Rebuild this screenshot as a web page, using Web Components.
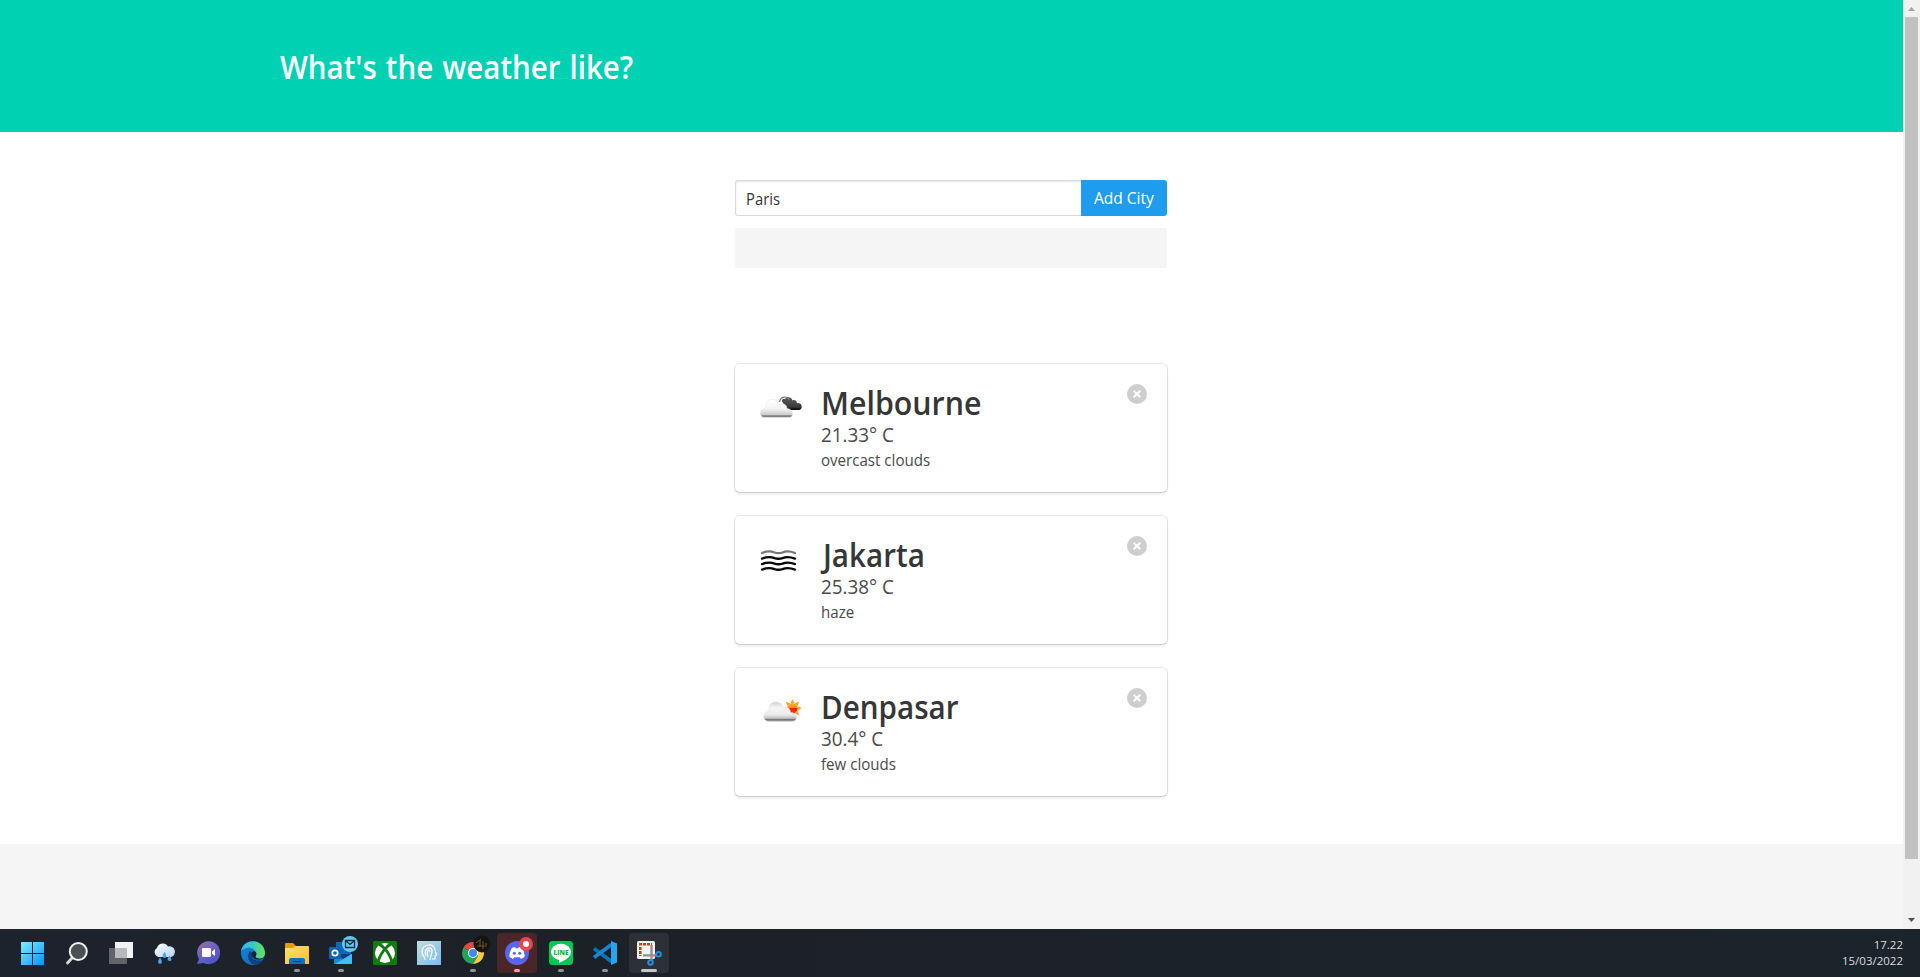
<!DOCTYPE html>
<html lang="en">
<head>
<meta charset="utf-8">
<title>Weather</title>
<style>
html,body{margin:0;height:100%;overflow:hidden}
body{font-family:"Open Sans","Noto Sans",sans-serif;color:#4a4a4a;background:#fff;font-size:16px}
</style>
</head>
<body>
<weather-desktop></weather-desktop>
<script>
const define=(name,html)=>customElements.define(name,class extends HTMLElement{
  constructor(){
    super();
    const t=document.createElement('template');
    t.innerHTML=html;
    this.attachShadow({mode:'open'}).append(t.content.cloneNode(true));
  }
});

define('page-hero',`<style>
:host{display:block;height:132px;background:#00d1b2;box-sizing:border-box;padding:49px 0 0 280px}
h1{margin:0;color:#fff;font-size:32px;line-height:36px;font-weight:600;white-space:nowrap;width:max-content;word-spacing:1.500px;transform:scaleX(.921);transform-origin:0 0}
</style><h1><slot></slot></h1>`);

define('city-form',`<style>
:host{display:block}
.row{display:flex;height:36px}
.field{flex:1;box-sizing:border-box;border:1px solid #dbdbdb;border-right:0;border-radius:3px 0 0 3px;box-shadow:inset 0 1px 2px rgba(10,10,10,.1);padding:0 9.500px;line-height:36px;color:#363636}
.value{display:inline-block;transform:scaleX(.925);transform-origin:0 0}
button{width:86px;border:0;border-radius:0 3px 3px 0;background:#209cee;color:#fff;font:inherit;padding:0;line-height:36px;white-space:nowrap}
.label{display:inline-block;transform:scaleX(.97)}
.note{height:40px;margin-top:12px;border-radius:3px;background:#f5f5f5}
</style><div class="row"><div class="field"><span class="value"><slot></slot></span></div><button><span class="label"><slot name="action"></slot></span></button></div><div class="note"></div>`);

define('weather-card',`<style>
:host{display:flex;box-sizing:border-box;height:128px;padding:20px;border-radius:5px;background:#fff;box-shadow:0 2px 3px rgba(10,10,10,.1),0 0 0 1px rgba(10,10,10,.1)}
.icon{width:50px;height:50px;margin-right:16px}
.text{flex:1;white-space:nowrap}
.text div{width:max-content;transform:scaleX(.943);transform-origin:0 0}
.text .name{font-size:32px;line-height:37px;font-weight:600;color:#363636;transform:scaleX(var(--fit,.925));margin-left:var(--nudge,0)}
.temp{font-size:20px;line-height:28px}
.desc{font-size:16px;line-height:22px}
.close{width:20px;height:20px}
</style><div class="icon"><slot name="icon"></slot></div>
<div class="text"><div class="name"><slot name="city"></slot></div><div class="temp"><slot name="temp"></slot></div><div class="desc"><slot name="desc"></slot></div></div>
<svg class="close" viewBox="0 0 20 20"><circle cx="10" cy="10" r="10" fill="#cecece"/><path d="M6.700 6.700l6.600 6.600m0-6.600l-6.600 6.600" stroke="#fff" stroke-width="2.100"/></svg>`);

define('page-scrollbar',`<style>
:host{display:flex;flex-direction:column;width:17px;background:#f1f1f1;align-items:center}
svg{width:17px;height:17px;display:block}
.thumb{width:13px;height:842px;background:#c1c1c1}
.gap{flex:1}
</style><svg viewBox="0 0 17 17"><path d="M5 11h7L8.500 7z" fill="#a3a3a3"/></svg><div class="thumb"></div><div class="gap"></div><svg viewBox="0 0 17 17"><path d="M5 6h7L8.500 10z" fill="#505050"/></svg>`);

define('task-icon',`<style>
:host{display:flex;width:44px;height:48px;justify-content:center;align-items:center}
.tile{width:40px;height:40px;border-radius:4px;display:flex;flex-direction:column;align-items:center;position:relative}
:host([state=alert]) .tile{background:#4a2629}
:host([state=active]) .tile{background:#2c3138}
::slotted(svg){width:44px;height:48px;margin:-4px -2px;flex:none;overflow:visible}
.pill{position:absolute;bottom:1px;width:6px;height:3px;border-radius:2px;background:#929497;display:none}
:host([state]) .pill{display:block}
:host([state=alert]) .pill{background:#ff99a4}
:host([state=active]) .pill{width:16px;background:#c4c6c4}
</style><div class="tile"><slot></slot><div class="pill"></div></div>`);

define('task-clock',`<style>
:host{display:flex;flex-direction:column;align-items:flex-end;margin-left:auto;margin-right:17px;margin-top:-1px;color:#dcdedf;font-size:11.500px;line-height:16px}
</style><slot></slot>`);

define('task-bar',`<style>
:host{display:flex;align-items:center;height:48px;box-sizing:border-box;padding-left:11px;background:linear-gradient(90deg,#1d232d,#1c2127 30%,#1c222a 60%,#1b232b)}
</style>
<task-icon><svg viewBox="-22 -24 44 48"><defs><linearGradient id="w" x2="1" y2="1"><stop stop-color="#7df0ff"/><stop offset="1" stop-color="#0592ff"/></linearGradient></defs><path fill="url(#w)" d="M-12-11H-1V0H-12zM0-11H11V0H0zM-12 1H-1V12H-12zM0 1H11V12H0z"/></svg></task-icon>
<task-icon><svg viewBox="-22 -24 44 48"><path d="M-5 5L-9.500 10" stroke="#d7d9dc" stroke-width="2.800" stroke-linecap="round"/><circle cx="1.300" cy="-1.500" r="8.500" fill="#4b5057" stroke="#f0f0f0" stroke-width="2"/></svg></task-icon>
<task-icon><svg viewBox="-22 -24 44 48"><path fill="#f2f2f2" d="M-6-11H12V5H-6z"/><path fill="#626467" d="M-12-5H6V11H-12z"/><path fill="#b9babb" d="M-6-5H6V5H-6z"/></svg></task-icon>
<task-icon><svg viewBox="-21 -24 44 48"><defs><linearGradient id="c" x2="1" y2="1"><stop stop-color="#fff"/><stop offset="1" stop-color="#b3d3ee"/></linearGradient></defs><path fill="url(#c)" d="M-6 4a5 5 0 0 1-1-9 6 6 0 0 1 11-1.500 5 5 0 0 1 3 10.500z"/><path fill="#4fa4ef" d="M-4 4.500c-3 4-2 6 0 6.500 2.500-.5 2.500-3 0-6.500zM.5-1c-3 4-2 5.500 0 6 2.500-.5 2.500-3 0-6zM5.500 2.500c-3 4-2 5 0 5.500 2.500 0 2.500-2 0-5.500z"/></svg></task-icon>
<task-icon><svg viewBox="-22 -24 44 48"><defs><linearGradient id="t" x2=".7" y2="1"><stop stop-color="#9c71a5"/><stop offset=".6" stop-color="#655fc5"/><stop offset="1" stop-color="#4b52c9"/></linearGradient></defs><path fill="url(#t)" d="M-12 11l2-5A11.500 11.500 0 1 1-5.500 10z"/><rect x="-7" y="-5" width="9" height="9" rx="1" fill="#fff"/><path fill="#fff" d="M3-1.500L6-4V3L3 .8z"/></svg></task-icon>
<task-icon><svg viewBox="-22 -24 44 48"><defs><linearGradient id="e" x2="1"><stop stop-color="#35b9ee"/><stop offset=".5" stop-color="#36c9c7"/><stop offset="1" stop-color="#6ee34c"/></linearGradient><linearGradient id="e2" x2="1" y2="1"><stop stop-color="#1389d8"/><stop offset="1" stop-color="#1064b7"/></linearGradient></defs><circle r="12" fill="url(#e2)"/><path fill="url(#e)" d="M-11.900-2C-10-15 11-15 12 0 12 5 7 7 3 5.500 1 5 1 4 2.500 2 4-3-2-6-6-5-9-4.500-11-3-11.900-2z"/><path fill="#123f82" d="M-3-2C-7 3-4 11 2 12 6 11.500 9 9 10.500 7 3 9-3 6-1-.5z"/><path fill="#1c222b" d="M1-2c-4 1-3 8 3 8.500 4 0 6-.5 7.800-2C8 6 3 5.500 2.500 4 4 1 4-1 1-2z"/></svg></task-icon>
<task-icon state="open"><svg viewBox="-22 -24 44 48"><defs><linearGradient id="f" y2="1" x2="1"><stop stop-color="#ffe07a"/><stop offset="1" stop-color="#f8bd24"/></linearGradient></defs><path fill="#e19c12" d="M-12-9q0-1 1-1h7l3 3h4v5H-12z"/><path fill="url(#f)" d="M-12-5H-4L-1-7H11q1 0 1 1V11H-12z"/><path fill="#0c70c5" d="M-8 11V7q0-2 2-2H6q2 0 2 2v4z"/><path stroke="#063d7d" d="M-4 8.500H4"/></svg></task-icon>
<task-icon state="open"><svg viewBox="-22 -24 44 48"><path fill="#1068b9" d="M-5-11H10V4H-5z"/><path fill="#1a8ad8" d="M-7 1H11V11H-7z"/><path fill="#123b6d" d="M-5 1H10L2 6z"/><path fill="#41bdf2" d="M-6 11L11 1V10q0 1-1 1z"/><rect x="-12" y="-6" width="12" height="12" rx="1" fill="#0a64b8"/><circle cx="-6" cy="0" r="2.700" fill="none" stroke="#fff" stroke-width="1.700"/><circle cx="9" cy="-9" r="8" fill="#62c8f7"/><path fill="none" stroke="#142b38" stroke-width="1.300" d="M4.500-12.500H13.500V-5.500H4.500zl4.500 4 4.500-4"/></svg></task-icon>
<task-icon><svg viewBox="-22 -24 44 48"><rect x="-12" y="-12" width="24" height="24" rx="1.500" fill="#107c10"/><circle r="10" fill="#fff"/><path fill="none" stroke="#107c10" stroke-width="2.800" d="M-7 8.500C-5 3-2-2 0-4 2-2 5 3 7 8.500M-6-8.500C-3-8-1-5 0-4 1-5 3-8 6-8.500"/></svg></task-icon>
<task-icon><svg viewBox="-22 -24 44 48"><defs><linearGradient id="h" x2="1" y2="1"><stop stop-color="#c3dedb"/><stop offset="1" stop-color="#76baf2"/></linearGradient></defs><path fill="url(#h)" d="M-12-12H12V12H-12z"/><path fill="none" stroke="#fff" stroke-width="1.200" d="M-4 7C-3 4-7 3-7-1-7-10 6-10 6-3L7.500 2 6 3V6H3M-3 3C-6-5 3-8 3-2 3 2 1 3 1 7M-1 4C-3-3 1-5 1-1"/></svg></task-icon>
<task-icon state="open"><svg viewBox="-22 -24 44 48"><path fill="#e34a3f" d="M0 0L-9.500-5.500A11 11 0 0 1 9.500-5.500L10 0z"/><path fill="#22a45a" d="M0 0L-9.500-5.500A11 11 0 0 0 0 11L5 3z"/><path fill="#fccb3c" d="M0-5H9.800A11 11 0 0 1 0 11L5 3z"/><circle r="5" fill="#fff"/><circle r="4" fill="#4187ee"/><circle cx="9" cy="-9" r="8.500" fill="#17140f"/><path stroke="#6b572b" stroke-width="1" d="M3-10l5-4M7-6V-13M10-4v-8M13-10v4M4-7h8"/></svg></task-icon>
<task-icon state="alert"><svg viewBox="-22 -24 44 48"><circle r="12" fill="#5865f2"/><path fill="#fff" d="M-5-5.200L-2-6l.8 1.200H1.200L2-6l3 .8C7-2 8 2 7.500 4L4 6 2.800 4.200H-2.800L-4 6-7.500 4C-8 2-7-2-5-5.200z"/><circle cx="-2.700" cy=".3" r="1.500" fill="#5865f2"/><circle cx="2.700" cy=".3" r="1.500" fill="#5865f2"/><circle cx="9" cy="-9" r="7" fill="#e5484d"/><circle cx="9" cy="-9" r="3" fill="#fff"/></svg></task-icon>
<task-icon state="open"><svg viewBox="-22 -24 44 48"><rect x="-12" y="-12" width="24" height="24" rx="3.500" fill="#06c755"/><ellipse cy="-1" rx="10" ry="8.300" fill="#fff"/><path fill="#fff" d="M-2 6V10Q7 6 8.500 3z"/><text y="1.600" text-anchor="middle" font-family="Open Sans,sans-serif" font-size="6.500" font-weight="800" fill="#06b94d">LINE</text></svg></task-icon>
<task-icon state="open"><svg viewBox="-22 -24 44 48"><path fill="none" stroke="#0d73ba" stroke-width="3.800" d="M-11-4.500L6.500 8.500"/><path fill="none" stroke="#1688cf" stroke-width="3.800" d="M-11 4.500L6.500-8.500"/><path fill="#2ba3ec" d="M6-12L12-9.500V9.500L6 12z"/></svg></task-icon>
<task-icon state="active"><svg viewBox="-22 -24 44 48"><rect x="-12" y="-12" width="18" height="18" rx="1.500" fill="#f4f4f4"/><path fill="none" stroke="#d83b12" stroke-width="2.600" stroke-dasharray="3 1" d="M-10-8.700H3M-8.700-6V3"/><path fill="none" stroke="#8b9197" stroke-width="2.300" d="M2.500-8V7M-6 2.300H8"/><g fill="none" stroke="#2490df" stroke-width="1.900"><circle cx="9.500" cy="1.300" r="2.300"/><circle cx="1.500" cy="9.500" r="2.300"/></g></svg></task-icon>
<task-clock><span>17.22</span><span>15/03/2022</span></task-clock>`);

define('weather-desktop',`<style>
:host{display:flex;flex-direction:column;width:1920px;height:977px}
.view{display:flex;height:929px}
.page{width:1903px;display:flex;flex-direction:column}
.body{height:712px;box-sizing:border-box;display:flex;flex-direction:column;align-items:center;padding:48px 1px 0 0}
city-form,weather-card{width:432px}
city-form{margin-bottom:96px}
weather-card{margin-bottom:24px}
.wide{--fit:.948}
.hook{--nudge:1.500px}
footer{flex:1;background:#f5f5f5}
svg{display:block;width:50px;height:50px}
</style>
<div class="view"><div class="page">
<page-hero>What's the weather like?</page-hero>
<div class="body">
<city-form>Paris<span slot="action">Add City</span></city-form>
<weather-card class="wide"><svg slot="icon" viewBox="0 0 50 50"><defs><linearGradient id="a" x2="0" y2="1"><stop stop-color="#fff"/><stop offset=".5" stop-color="#f4f4f4"/><stop offset=".84" stop-color="#ccc"/><stop offset=".91" stop-color="#707070"/><stop offset="1" stop-color="#aaa"/></linearGradient><linearGradient id="b" x2="0" y2="1"><stop stop-color="#5c5c5c"/><stop offset=".75" stop-color="#3a3a3a"/><stop offset="1" stop-color="#000"/></linearGradient></defs><path fill="url(#b)" d="M31 24c-1-4-4-5-4-7.500 0-1.500 2-2 3-1.500 2-3 7-2 7.500 1.500 2-1 4 0 4.500 2.500 3 0 4.700 1 4.700 3.500 0 2-1 3.600-3 3.600H34z"/><path fill="none" stroke="#777" stroke-width="1.200" d="M24.500 18c1-6 8-6.500 9.500-2"/><path fill="url(#a)" stroke="#e2e2e2" stroke-width=".5" d="M10 33.600H34C39 33.600 39 25 32 24.500 32 20.500 28 19 24.500 21 24.500 17.500 21.500 15.500 17.500 15.500 13 15.500 10.300 19 10.500 24.500 4 24.500 3.500 33.600 10 33.600z"/></svg><span slot="city">Melbourne</span><span slot="temp">21.33° C</span><span slot="desc">overcast clouds</span></weather-card>
<weather-card class="hook"><svg slot="icon" viewBox="0 0 50 50"><g fill="none" stroke="#050505" stroke-width="2.300" stroke-linecap="round"><path stroke="#777" d="M7 17C12 15 16 15 19.500 16.500Q23.500 17.800 27.500 16.500C31 15 35 15 40 17"/><path d="M7 22.600C12 20.600 16 20.600 19.500 22.100Q23.500 23.400 27.500 22.100C31 20.600 35 20.600 40 22.600M7 28.100C12 26.100 16 26.100 19.500 27.600Q23.500 28.900 27.500 27.600C31 26.100 35 26.100 40 28.100M7 33.600C12 31.600 16 31.600 19.500 33.100Q23.500 34.400 27.500 33.100C31 31.600 35 31.600 40 33.600"/></g></svg><span slot="city">Jakarta</span><span slot="temp">25.38° C</span><span slot="desc">haze</span></weather-card>
<weather-card><svg slot="icon" viewBox="0 0 50 50"><defs><linearGradient id="g" x2="0" y2="1"><stop stop-color="#d2d2d2"/><stop offset=".3" stop-color="#f6f6f6"/><stop offset=".65" stop-color="#ececec"/><stop offset=".84" stop-color="#c2c2c2"/><stop offset=".91" stop-color="#707070"/><stop offset="1" stop-color="#aaa"/></linearGradient><linearGradient id="s" x2="0" y2="1"><stop stop-color="#ffb01f"/><stop offset=".45" stop-color="#ff8a1a"/><stop offset=".5" stop-color="#ff1e00"/><stop offset="1" stop-color="#ff3c10"/></linearGradient></defs><g fill="#ffa01e"><path id="r" d="M35.500 15L37.500 11l2 4z"/><use href="#r" transform="rotate(45 37.500 20.300)"/><use href="#r" transform="rotate(90 37.500 20.300)"/><use href="#r" transform="rotate(135 37.500 20.300)"/><use href="#r" transform="rotate(-45 37.500 20.300)"/></g><circle cx="37.500" cy="20.300" r="5.200" fill="url(#s)"/><path fill="url(#g)" stroke="#dedede" stroke-width=".4" d="M14 33.400H37C43.500 33.400 43 25 35.500 24.300 35.500 20.500 32 18 28 20 27.500 16 24.500 13.900 20.500 13.900 16 13.900 13.500 18 13.800 23.500 7 23.500 7 33.400 14 33.400z"/></svg><span slot="city">Denpasar</span><span slot="temp">30.4° C</span><span slot="desc">few clouds</span></weather-card>
</div><footer></footer></div><page-scrollbar></page-scrollbar></div>
<task-bar></task-bar>`);
</script>
</body>
</html>
